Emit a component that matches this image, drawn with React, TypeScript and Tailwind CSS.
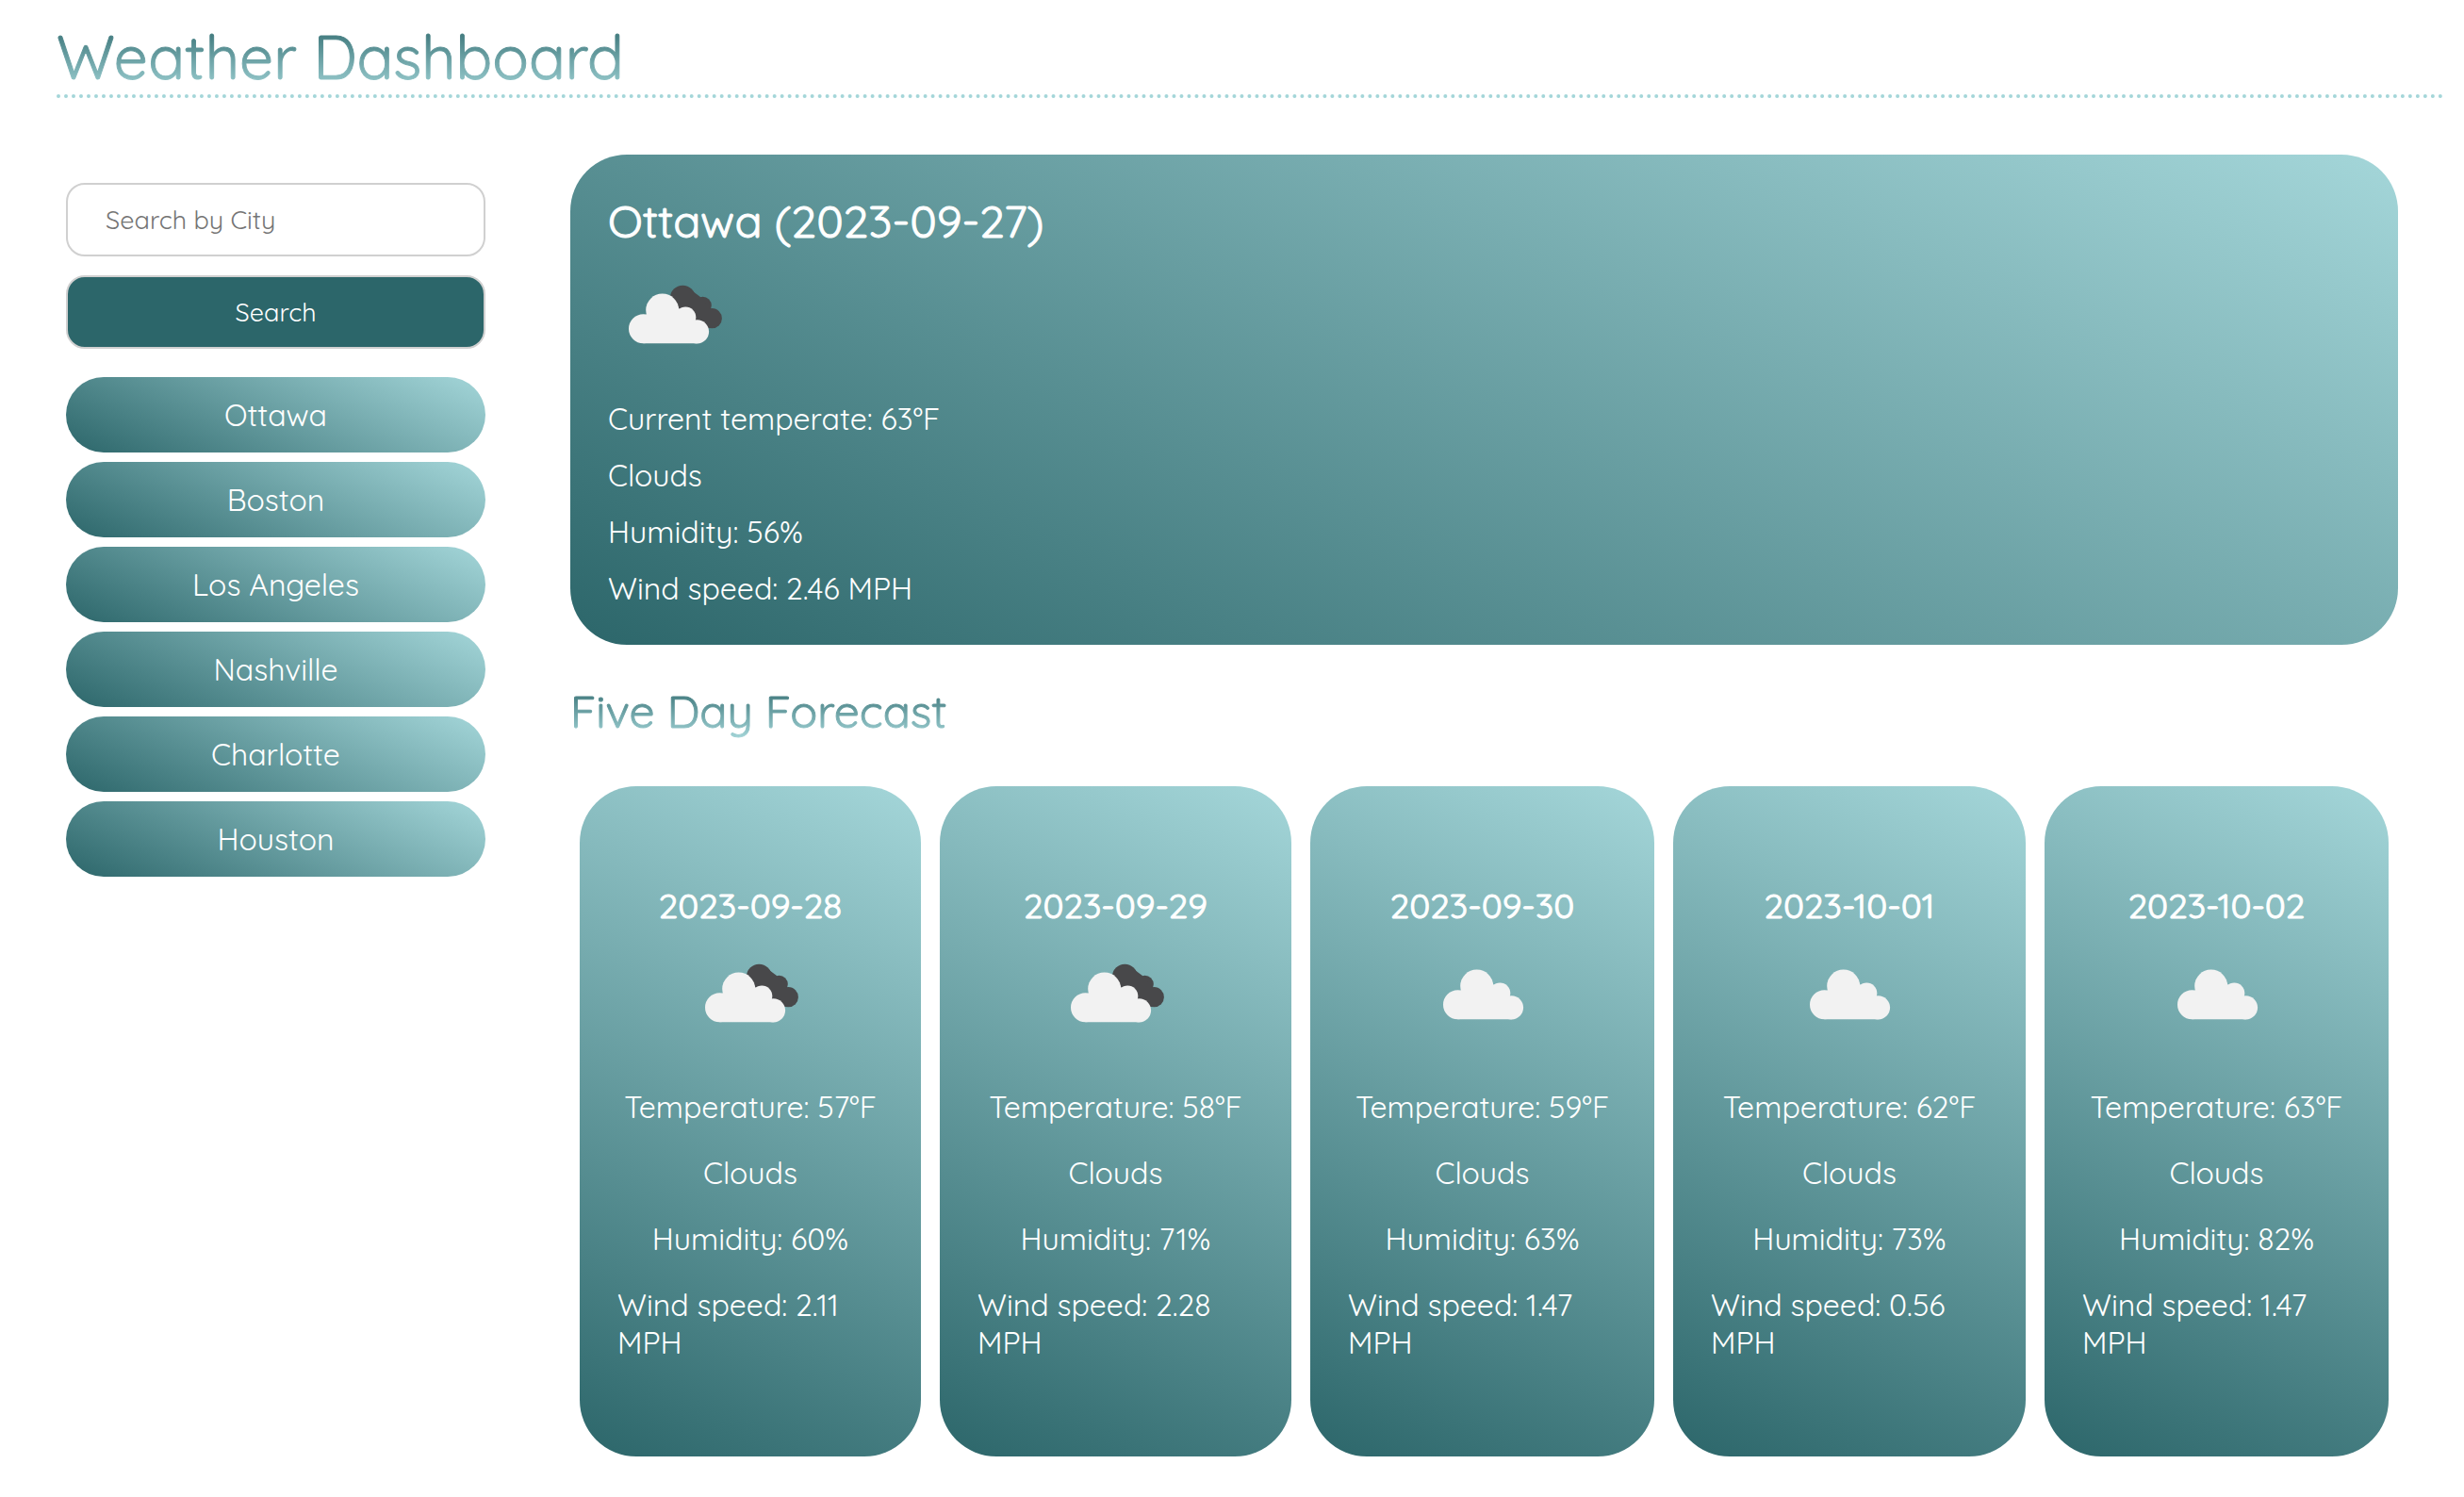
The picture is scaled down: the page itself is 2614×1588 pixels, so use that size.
import React from "react";

type Sky = "broken" | "scattered";

interface Forecast {
  date: string;
  sky: Sky;
  temperature: number;
  humidity: number;
  wind: string;
}

const cities = ["Ottawa", "Boston", "Los Angeles", "Nashville", "Charlotte", "Houston"];

const forecast: Forecast[] = [
  { date: "2023-09-28", sky: "broken", temperature: 57, humidity: 60, wind: "2.11" },
  { date: "2023-09-29", sky: "broken", temperature: 58, humidity: 71, wind: "2.28" },
  { date: "2023-09-30", sky: "scattered", temperature: 59, humidity: 63, wind: "1.47" },
  { date: "2023-10-01", sky: "scattered", temperature: 62, humidity: 73, wind: "0.56" },
  { date: "2023-10-02", sky: "scattered", temperature: 63, humidity: 82, wind: "1.47" },
];

const tealFill = "bg-[linear-gradient(25deg,#2c666a,#a4d6d9)]";
const tealText = "bg-[linear-gradient(180deg,#2c666a,#a4d6d9)] bg-clip-text text-transparent";
const heavyStroke = "[-webkit-text-stroke-width:1px]";

function FrontCloud() {
  return (
    <g fill="#f2f2f2">
      <circle cx="37.5" cy="84.8" r="15.5" />
      <circle cx="57.7" cy="65" r="17.5" />
      <circle cx="82.3" cy="72.5" r="11" />
      <circle cx="94.5" cy="87.8" r="12.6" />
      <path d="M37.5 100.3h57V78L82 66 66 60 42 68 37 74z" />
    </g>
  );
}

function CloudIcon({ sky }: { sky: Sky }) {
  return (
    <svg viewBox="0 0 140 140" className="size-[140px] shrink-0" role="img" aria-label="Clouds">
      {sky === "broken" ? (
        <>
          <g fill="#48484a">
            <circle cx="79.3" cy="52" r="13.3" />
            <circle cx="100.5" cy="60" r="9.3" />
            <circle cx="110.3" cy="73.7" r="10.6" />
            <path d="M68 58L86 42l12 9 10 12v21l-8-1-20-12z" />
          </g>
          <FrontCloud />
        </>
      ) : (
        <g transform="translate(6 -3)">
          <FrontCloud />
        </g>
      )}
    </svg>
  );
}

function Sidebar() {
  return (
    <aside className="w-[445px] shrink-0 pt-[30px]">
      <form className="flex flex-col gap-5" onSubmit={(e) => e.preventDefault()}>
        <input
          type="text"
          aria-label="Search by City"
          placeholder="Search by City"
          className="h-[78px] w-full rounded-[20px] border-2 border-[#d0d0d0] bg-white px-10 text-[27px] outline-none placeholder:text-[#757575]"
        />
        <button
          type="submit"
          className="h-[78px] w-full rounded-[20px] border-2 border-[#d0d0d0] bg-[#2c666a] text-[27px] text-white"
        >
          Search
        </button>
      </form>
      <div className="mt-[30px] flex flex-col gap-2.5">
        {cities.map((city) => (
          <button
            key={city}
            type="button"
            className={`h-20 w-full rounded-[40px] text-[32px] leading-10 text-white ${tealFill}`}
          >
            {city}
          </button>
        ))}
      </div>
    </aside>
  );
}

function CurrentWeather() {
  return (
    <section className={`rounded-[60px] p-10 text-[32px] leading-10 text-white ${tealFill}`}>
      <h2 className={`text-[48px] leading-[60px] ${heavyStroke}`}>Ottawa (2023-09-27)</h2>
      <CloudIcon sky="broken" />
      <div className="mt-5 flex flex-col gap-5">
        <p>Current temperate: 63°F</p>
        <p>Clouds</p>
        <p>Humidity: 56%</p>
        <p>Wind speed: 2.46 MPH</p>
      </div>
    </section>
  );
}

function ForecastCard({ day }: { day: Forecast }) {
  return (
    <article
      className={`flex flex-col items-center rounded-[60px] px-10 pt-[102px] pb-[101px] text-[32px] leading-10 text-white ${tealFill}`}
    >
      <h3 className={`text-[37px] leading-[48px] ${heavyStroke}`}>{day.date}</h3>
      <CloudIcon sky={day.sky} />
      <div className="mt-[30px] flex flex-col items-center gap-[30px] self-stretch">
        <p className="whitespace-nowrap">Temperature: {day.temperature}°F</p>
        <p>Clouds</p>
        <p>Humidity: {day.humidity}%</p>
        <p className="self-stretch">
          Wind speed: {day.wind}
          <br />
          MPH
        </p>
      </div>
    </article>
  );
}

export default function App() {
  return (
    <div className="min-h-screen bg-white pb-10 font-['Quicksand','Lato',sans-serif]">
      <header className="mr-5 ml-[60px] border-b-4 border-dotted border-[#a4d6d9] pt-5">
        <h1 className={`text-[64px] leading-[80px] ${tealText} ${heavyStroke}`}>Weather Dashboard</h1>
      </header>
      <div className="mt-[60px] flex items-start gap-[90px] px-[70px]">
        <Sidebar />
        <main className="min-w-0 flex-1">
          <CurrentWeather />
          <h2 className={`mt-10 text-[48px] leading-[60px] ${tealText} ${heavyStroke}`}>
            Five Day Forecast
          </h2>
          <div className="mt-[50px] grid grid-cols-[362fr_373fr_365fr_374fr_365fr] gap-5 px-2.5">
            {forecast.map((day) => (
              <ForecastCard key={day.date} day={day} />
            ))}
          </div>
        </main>
      </div>
    </div>
  );
}
